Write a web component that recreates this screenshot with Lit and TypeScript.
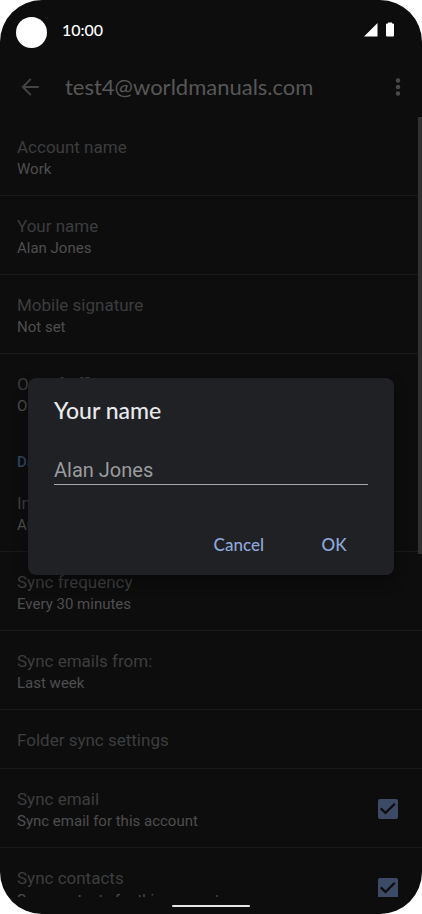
import { LitElement, html, css, nothing } from "lit";
import { customElement, property, state } from "lit/decorators.js";

interface Setting {
  title: string;
  summary?: string;
  checked?: boolean;
}

const GENERAL: Setting[] = [
  { title: "Account name", summary: "Work" },
  { title: "Your name", summary: "Alan Jones" },
  { title: "Mobile signature", summary: "Not set" },
  { title: "Out of office auto-reply", summary: "Off" },
];

const DATA_USAGE: Setting[] = [
  { title: "Inbox check frequency", summary: "Automatic (Push)" },
  { title: "Sync frequency", summary: "Every 30 minutes" },
  { title: "Sync emails from:", summary: "Last week" },
  { title: "Folder sync settings" },
  { title: "Sync email", summary: "Sync email for this account", checked: true },
  { title: "Sync contacts", summary: "Sync contacts for this account", checked: true },
];

@customElement("setting-row")
export class SettingRow extends LitElement {
  @property({ attribute: false }) setting!: Setting;

  static styles = css`
    :host {
      display: block;
      border-bottom: 1px solid #191919;
    }
    :host(:last-of-type) {
      border-bottom-color: transparent;
    }
    .row {
      box-sizing: border-box;
      width: 100%;
      display: flex;
      align-items: center;
      justify-content: space-between;
      padding: 18px 24px 16px 17px;
      border: 0;
      background: none;
      font: inherit;
      text-align: left;
    }
    .text {
      display: flex;
      flex-direction: column;
    }
    .title {
      font-size: 17px;
      line-height: 24px;
      color: #3c3d3e;
    }
    .summary {
      font-size: 15px;
      line-height: 20px;
      color: #4e4e4f;
    }
    .box {
      appearance: none;
      flex: none;
      width: 20px;
      height: 20px;
      margin: 0;
      border-radius: 2px;
      background: #3d4a66;
      grid-area: 1 / 1;
    }
    .box:not(:checked) {
      background: none;
      border: 2px solid #3a3b3c;
    }
    .tick {
      display: grid;
    }
    .tick svg {
      grid-area: 1 / 1;
      width: 20px;
      height: 20px;
      pointer-events: none;
    }
  `;

  render() {
    const { title, summary, checked } = this.setting;
    const text = html`<span class="text">
      <span class="title">${title}</span>
      ${summary ? html`<span class="summary">${summary}</span>` : nothing}
    </span>`;
    if (checked === undefined) {
      return html`<button class="row" type="button">${text}</button>`;
    }
    return html`<label class="row">
      ${text}
      <span class="tick">
        <input class="box" type="checkbox" .checked=${checked} />
        <svg viewBox="0 0 20 20" aria-hidden="true">
          <path d="M2.800 9.400 7.500 14 16.800 4.800" fill="none" stroke="#0d0d0d" stroke-width="2.300" />
        </svg>
      </span>
    </label>`;
  }
}

@customElement("name-dialog")
export class NameDialog extends LitElement {
  @state() private value = "Alan Jones";

  static styles = css`
    :host {
      display: block;
    }
    .card {
      box-sizing: border-box;
      padding: 19px 26px 10px;
      border-radius: 8px;
      background: #202124;
      box-shadow: 0 6px 14px #00000066;
    }
    h2 {
      margin: 0;
      font: 500 23px/26px var(--display-font);
      color: #e8eaed;
    }
    .field {
      box-sizing: border-box;
      display: block;
      width: 100%;
      height: 32px;
      margin-top: 30px;
      padding: 2px 0 0;
      border: 0;
      border-bottom: 1px solid #a8a8a6;
      border-radius: 0;
      outline: 0;
      background: none;
      font: 20px/26px Roboto, sans-serif;
      color: #9a9b9d;
    }
    .actions {
      display: flex;
      justify-content: flex-end;
      gap: 20px;
      margin-top: 40px;
    }
    .action {
      min-width: 68px;
      height: 40px;
      padding: 0 16px;
      border: 0;
      background: none;
      font: 500 17px/20px var(--display-font);
      color: #8fa8dc;
    }
  `;

  render() {
    return html`<form class="card" role="dialog" aria-labelledby="heading" @submit=${(e: Event) => e.preventDefault()}>
      <h2 id="heading">Your name</h2>
      <input
        class="field"
        type="text"
        aria-labelledby="heading"
        .value=${this.value}
        @input=${(e: Event) => (this.value = (e.target as HTMLInputElement).value)}
      />
      <div class="actions">
        <button class="action" type="button">Cancel</button>
        <button class="action" type="submit">OK</button>
      </div>
    </form>`;
  }
}

@customElement("app-root")
export class AppRoot extends LitElement {
  static styles = css`
    :host {
      --display-font: Lato, "Open Sans", sans-serif;
      display: block;
      background: #ffffff;
      font-family: Roboto, sans-serif;
    }
    .screen {
      position: relative;
      display: flex;
      flex-direction: column;
      height: 100vh;
      overflow: hidden;
      border-radius: 42px;
      background: #0d0d0d;
    }
    .status {
      display: flex;
      align-items: center;
      flex: none;
      height: 32px;
      padding: 16px 28px 8px 16px;
    }
    .camera {
      width: 31px;
      height: 31px;
      border-radius: 50%;
      background: #ffffff;
    }
    .clock {
      flex: 1;
      padding: 0 0 4px 15px;
      font: 500 16px/20px var(--display-font);
      color: #ffffff;
    }
    .signals {
      width: 32px;
      height: 16px;
      padding-bottom: 4px;
    }
    .bar {
      display: flex;
      align-items: center;
      flex: none;
      height: 61px;
      padding: 0 12px 0 18px;
    }
    .icon {
      display: flex;
      flex: none;
      padding: 0;
      border: 0;
      background: none;
    }
    .icon svg {
      width: 24px;
      height: 24px;
    }
    h1 {
      flex: 1;
      margin: 0;
      padding-left: 23px;
      font: 400 22px/28px var(--display-font);
      color: #575757;
    }
    .list {
      flex: 1;
      min-height: 0;
      overflow: hidden;
      display: flex;
      justify-content: space-between;
    }
    .rows {
      flex: 1;
    }
    .thumb {
      width: 4px;
      height: 56%;
      margin-left: -4px;
      background: #303030;
    }
    h3 {
      margin: 0;
      padding: 19px 17px 1px;
      font: 500 15px/20px Roboto, sans-serif;
      color: #34435f;
    }
    .nav {
      display: flex;
      justify-content: center;
      align-items: center;
      flex: none;
      height: 17px;
    }
    .handle {
      width: 78px;
      height: 2px;
      border-radius: 1px;
      background: #e6e6e6;
    }
    .overlay {
      position: absolute;
      inset: 39px 0 0;
      display: grid;
      align-items: center;
      padding: 0 28px;
    }
  `;

  private rows(settings: Setting[]) {
    return settings.map((s) => html`<setting-row .setting=${s}></setting-row>`);
  }

  render() {
    return html`<main class="screen">
      <div class="status">
        <span class="camera"></span>
        <span class="clock">10:00</span>
        <svg class="signals" viewBox="0 0 32 16" aria-hidden="true">
          <path d="M15.500 1v13.500H2zM25 1.500h1V.4h4v1.100h1q1 0 1 1v11q0 1-1 1h-6q-1 0-1-1v-11q0-1 1-1z" fill="#ffffff" />
        </svg>
      </div>
      <header class="bar">
        <button class="icon" type="button" aria-label="Back">
          <svg viewBox="0 0 24 24" aria-hidden="true">
            <path d="M20.700 12H5.200M12.800 3.900 4.900 12l7.900 8.100" fill="none" stroke="#444444" stroke-width="2" />
          </svg>
        </button>
        <h1>test4@worldmanuals.com</h1>
        <button class="icon" type="button" aria-label="More options">
          <svg viewBox="0 0 24 24" aria-hidden="true">
            <g fill="#4a4a4a">
              <circle cx="12" cy="5.500" r="2.200" />
              <circle cx="12" cy="12" r="2.200" />
              <circle cx="12" cy="18.500" r="2.200" />
            </g>
          </svg>
        </button>
      </header>
      <div class="list">
        <div class="rows">
          <section>${this.rows(GENERAL)}</section>
          <section>
            <h3>Data usage</h3>
            ${this.rows(DATA_USAGE)}
          </section>
        </div>
        <div class="thumb"></div>
      </div>
      <div class="nav"><span class="handle"></span></div>
      <div class="overlay"><name-dialog></name-dialog></div>
    </main>`;
  }
}
